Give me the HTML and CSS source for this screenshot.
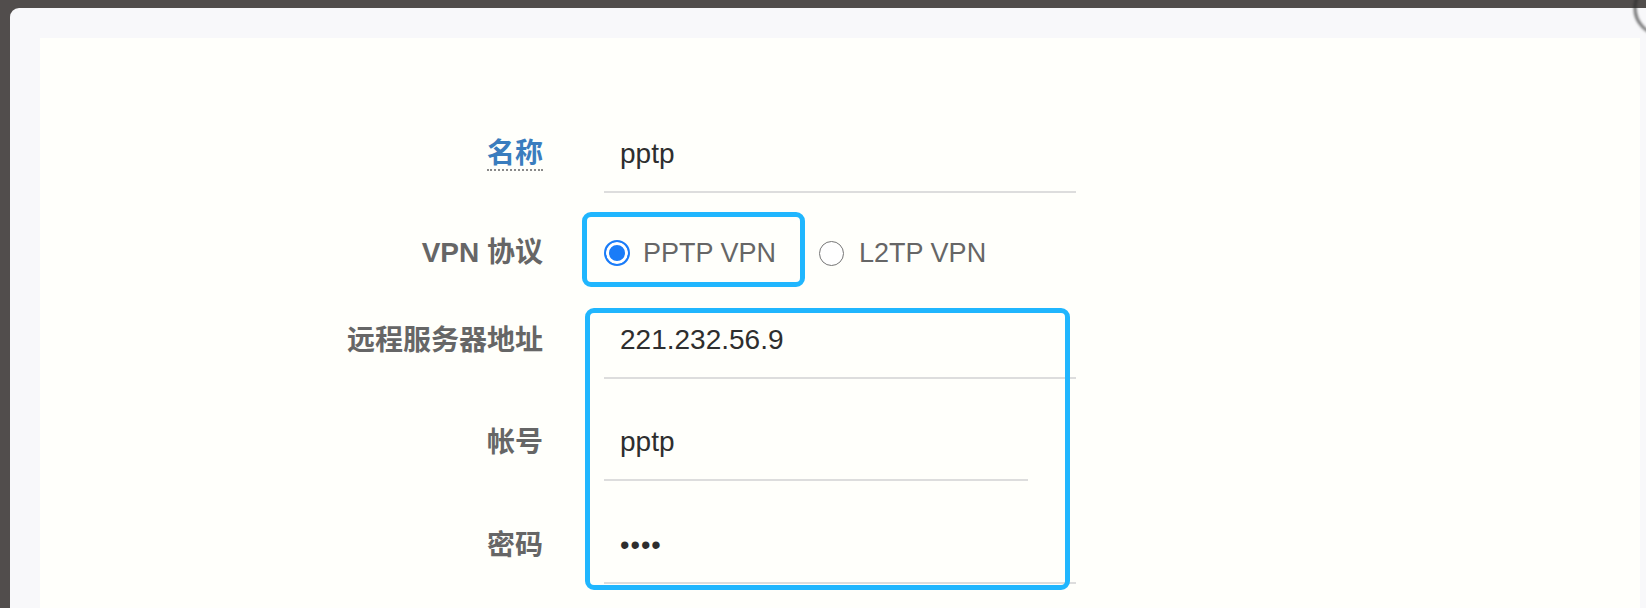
FILE: index.html
```html
<!DOCTYPE html>
<html lang="zh">
<head>
<meta charset="utf-8">
<title>VPN</title>
<link rel="stylesheet" href="styles.css">
</head>
<body>
<div class="window">
  <div class="card">
    <form class="form">
      <div class="row row-name">
        <div class="label"><span class="label-link">名称</span></div>
        <div class="field"><span class="value">pptp</span></div>
      </div>
      <div class="row row-radio">
        <div class="label">VPN 协议</div>
        <div class="radios">
          <span class="radio checked"></span><span class="radio-text">PPTP VPN</span>
          <span class="radio second"></span><span class="radio-text second-text">L2TP VPN</span>
        </div>
      </div>
      <div class="row row-server">
        <div class="label">远程服务器地址</div>
        <div class="field"><span class="value">221.232.56.9</span></div>
      </div>
      <div class="row row-account">
        <div class="label">帐号</div>
        <div class="field short"><span class="value">pptp</span></div>
      </div>
      <div class="row row-password">
        <div class="label">密码</div>
        <div class="field"><span class="value dots">••••</span></div>
      </div>
    </form>
  </div>
</div>
<div class="mark mark-proto"></div>
<div class="mark mark-fields"></div>
<div class="corner-shadow"></div>
</body>
</html>
```

FILE: styles.css
```css
html, body {
  margin: 0;
  padding: 0;
}
body {
  background: #514d4c;
  font-family: "Liberation Sans", "Noto Sans CJK SC", sans-serif;
  height: 608px;
  overflow: hidden;
  position: relative;
}
.window {
  margin: 8px 0 0 10px;
  background: #f8f8fa;
  border-top-left-radius: 9px;
  padding: 30px 6px 0 30px;
  height: 600px;
  box-sizing: border-box;
}
.card {
  background: #fffffb;
  height: 570px;
  box-sizing: border-box;
  padding-top: 79px;
  padding-left: 303px;
}
.form {
  margin: 0;
}
.row {
  display: flex;
  align-items: center;
  height: 76px;
  margin-top: 26px;
}
.row-name { margin-top: 0; }
.row-radio { height: 60px; margin-top: 30px; }
.row-server { margin-top: 20px; }
.row-account { margin-top: 26px; }
.row-password { margin-top: 27px; }

.label {
  width: 200px;
  flex: none;
  margin-right: 61px;
  text-align: right;
  font-size: 28px;
  font-weight: 700;
  color: #666666;
  line-height: 30px;
}
.label-link {
  display: inline-block;
  color: #3a7dbe;
  border-bottom: 2px dotted #8a8a8a;
  line-height: 30px;
}
.field {
  width: 472px;
  height: 76px;
  box-sizing: border-box;
  border-bottom: 2px solid #dddddd;
  padding-left: 16px;
  display: flex;
  align-items: center;
  font-size: 28px;
  color: #2e2e2e;
}
.field.short {
  width: 424px;
}
.dots {
  font-size: 27px;
  letter-spacing: 1px;
}
.radios {
  display: flex;
  align-items: center;
  font-size: 27px;
  color: #666666;
}
.radio {
  width: 26px;
  height: 26px;
  box-sizing: border-box;
  border-radius: 50%;
  border: 1.5px solid #767676;
  background: #ffffff;
  flex: none;
}
.radio.checked {
  border: 2px solid #1a7cf8;
  background: #1a7cf8;
  box-shadow: inset 0 0 0 3px #ffffff;
}
.radio.second {
  width: 25px;
  height: 25px;
  margin-left: 43px;
}
.radio-text {
  margin-left: 13px;
}
.radio-text.second-text {
  margin-left: 15px;
}
.mark {
  position: absolute;
  box-sizing: border-box;
  border: 5px solid #20b6fe;
  border-radius: 9px;
}
.mark-proto {
  left: 582px;
  top: 212px;
  width: 223px;
  height: 75px;
}
.mark-fields {
  left: 585px;
  top: 308px;
  width: 485px;
  height: 282px;
}
.corner-shadow {
  position: absolute;
  left: 1634px;
  top: -20px;
  width: 52px;
  height: 52px;
  border-radius: 50%;
  border: 2px solid #2a2a2a;
  filter: blur(1.5px);
}
```
